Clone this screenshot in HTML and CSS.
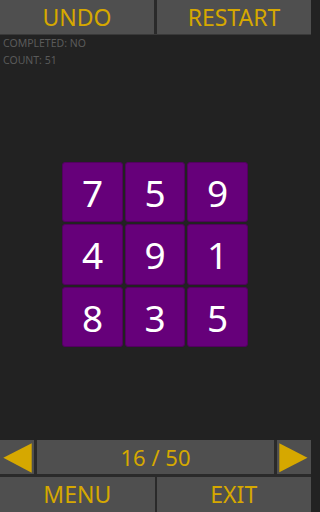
FILE: index.html
```html
<!DOCTYPE html>
<html>
<head>
<meta charset="utf-8">
<link rel="stylesheet" href="styles.css">
</head>
<body>
<div class="app">
  <div class="topbar">
    <div class="btn big">UNDO</div>
    <div class="btn big">RESTART</div>
  </div>
  <div class="info">
    <div>COMPLETED: NO</div>
    <div>COUNT: 51</div>
  </div>
  <div class="stage">
    <div class="board">
      <div class="tile">7</div><div class="tile">5</div><div class="tile">9</div>
      <div class="tile">4</div><div class="tile">9</div><div class="tile">1</div>
      <div class="tile">8</div><div class="tile">3</div><div class="tile">5</div>
    </div>
  </div>
  <div class="nav">
    <div class="btn arrow">
      <svg width="34" height="34" viewBox="0 0 34 34"><polygon points="3.3,17.8 31.7,3.3 31.7,32.7" fill="#d6a800"/></svg>
    </div>
    <div class="btn level">16 / 50</div>
    <div class="btn arrow">
      <svg width="34" height="34" viewBox="0 0 34 34"><polygon points="2.3,3.3 2.3,32.3 30.5,17.8" fill="#d6a800"/></svg>
    </div>
  </div>
  <div class="bottombar">
    <div class="btn big">MENU</div>
    <div class="btn big">EXIT</div>
  </div>
</div>
</body>
</html>
```
FILE: styles.css
```css
* { box-sizing: border-box; }
html, body { margin: 0; padding: 0; }
body {
  background: #222222;
  font-family: "Noto Sans", "Open Sans", sans-serif;
  width: 311px;
  height: 512px;
  overflow: hidden;
}
.app {
  display: flex;
  flex-direction: column;
  height: 512px;
}
.btn {
  background: #4f4f4f;
  color: #d6a800;
  display: flex;
  align-items: center;
  justify-content: center;
  line-height: 1;
}
.big { font-size: 23px; }
.topbar {
  display: grid;
  grid-template-columns: 1fr 1fr;
  column-gap: 3px;
  height: 35px;
  background: #2a2a2a;
  border-bottom: 1px solid #393939;
}
.info {
  height: 34px;
  padding-left: 3px;
  font-size: 10.5px;
  line-height: 17px;
  color: #5a5a5a;
}
.stage {
  flex: 1;
  display: flex;
  align-items: center;
  justify-content: center;
}
.board {
  display: grid;
  grid-template-columns: repeat(3, 60.5px);
  grid-template-rows: repeat(3, 60.5px);
  gap: 2px;
  margin-left: -1px;
}
.tile {
  background: #66007a;
  border: 1px solid #52005f;
  border-radius: 3px;
  color: #ffffff;
  font-size: 37px;
  display: flex;
  align-items: center;
  justify-content: center;
  line-height: 1;
}
.nav {
  display: grid;
  grid-template-columns: 34px 1fr 34px;
  column-gap: 3px;
  height: 37px;
  background: #2a2a2a;
  padding-bottom: 3px;
}
.level { font-size: 22px; }
.arrow { padding: 0; }
.arrow svg { display: block; }
.bottombar {
  display: grid;
  grid-template-columns: 1fr 1fr;
  column-gap: 2px;
  height: 35px;
  background: #2a2a2a;
}
```
